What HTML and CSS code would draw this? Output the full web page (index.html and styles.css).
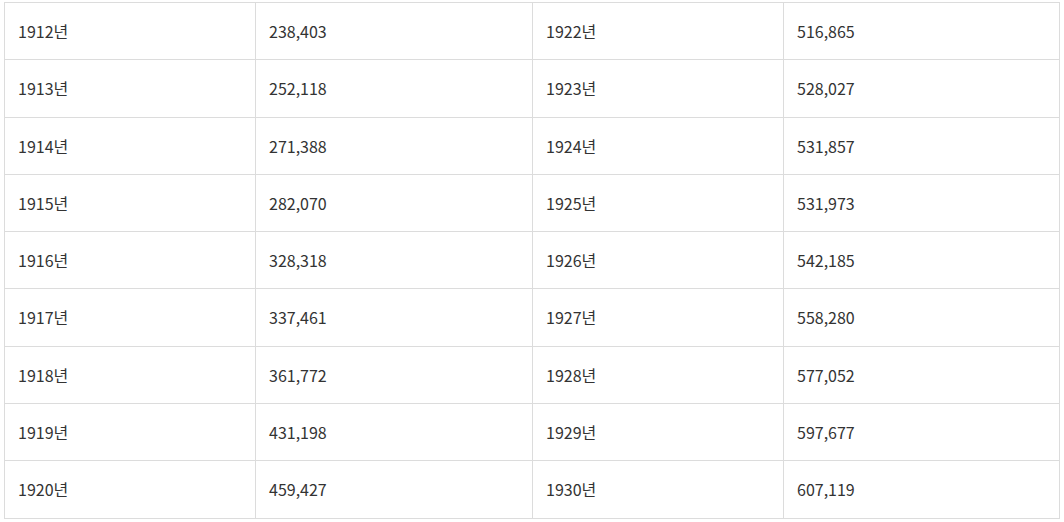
FILE: index.html
```html
<!DOCTYPE html>
<html lang="ko">
<head>
<meta charset="utf-8">
<link rel="stylesheet" href="styles.css">
</head>
<body>
<div class="wrap">
<table class="data">
<colgroup><col class="c1"><col class="c2"><col class="c3"><col class="c4"></colgroup>
<tbody>
<tr><td>1912년</td><td>238,403</td><td>1922년</td><td>516,865</td></tr>
<tr><td>1913년</td><td>252,118</td><td>1923년</td><td>528,027</td></tr>
<tr><td>1914년</td><td>271,388</td><td>1924년</td><td>531,857</td></tr>
<tr><td>1915년</td><td>282,070</td><td>1925년</td><td>531,973</td></tr>
<tr><td>1916년</td><td>328,318</td><td>1926년</td><td>542,185</td></tr>
<tr><td>1917년</td><td>337,461</td><td>1927년</td><td>558,280</td></tr>
<tr><td>1918년</td><td>361,772</td><td>1928년</td><td>577,052</td></tr>
<tr><td>1919년</td><td>431,198</td><td>1929년</td><td>597,677</td></tr>
<tr><td>1920년</td><td>459,427</td><td>1930년</td><td>607,119</td></tr>
</tbody>
</table>
</div>
</body>
</html>
```
FILE: styles.css
```css
html, body {
  margin: 0;
  padding: 0;
  background: #fff;
}
.wrap {
  padding: 2px 4px;
}
.data {
  width: 100%;
  border-collapse: collapse;
  table-layout: fixed;
  font-family: "Noto Sans CJK KR", "Noto Sans", sans-serif;
  font-size: 16px;
  font-weight: 400;
  line-height: 24.3px;
  color: #333;
}
.c1 { width: 251px; }
.c2 { width: 277px; }
.c3 { width: 251px; }
.c4 { width: auto; }
.data td {
  border: 1px solid #dcdcdc;
  padding: 16px 13px;
  text-align: left;
  vertical-align: middle;
}
```
